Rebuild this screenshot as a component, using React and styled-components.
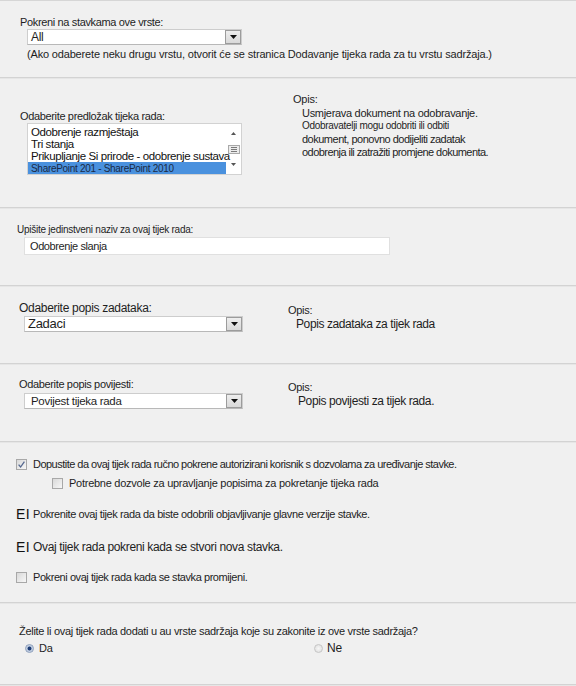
import React from "react";
import styled, { createGlobalStyle } from "styled-components";

const Global = createGlobalStyle`
  html, body { margin: 0; padding: 0; background: #f0f0f0; }
  body { font-family: "Liberation Sans", Arial, sans-serif; color: #1e1e1e; }
  #root { width: 576px; height: 686px; overflow: hidden; }
`;

const Page = styled.div`
  width: 576px;
  height: 686px;
  background: #f0f0f0;
  border-top: 1px solid #d6d6d6;
  box-sizing: border-box;
`;

const Section = styled.div`
  height: ${(p) => p.$h}px;
  box-sizing: border-box;
  border-bottom: 1px solid #d3d3d3;
  box-shadow: 0 1px 0 #e6e6e6;
  padding: ${(p) => p.$pad || "0"};
  display: ${(p) => (p.$cols ? "grid" : "block")};
  grid-template-columns: ${(p) => p.$cols || "none"};
`;

const Col = styled.div`
  padding-top: ${(p) => p.$top || 0}px;
  padding-left: ${(p) => p.$left || 0}px;
`;

const Label = styled.div`
  font-size: ${(p) => p.$size || 11}px;
  line-height: ${(p) => p.$lh || 13}px;
  letter-spacing: ${(p) => p.$ls ?? -0.35}px;
  white-space: nowrap;
  margin-left: ${(p) => p.$ml || 0}px;
`;

const Note = styled.div`
  font-size: 11px;
  line-height: 13px;
  letter-spacing: -0.17px;
  white-space: nowrap;
  margin: 3px 0 0 7px;
`;

const SelectBox = styled.div`
  width: ${(p) => p.$w}px;
  height: 16px;
  margin: ${(p) => p.$mt || 0}px 0 0 ${(p) => p.$ml}px;
  background: #fff;
  border: 1px solid #cdcdcd;
  border-bottom-color: #b8b8b8;
  box-sizing: border-box;
  display: flex;
  align-items: center;
  justify-content: space-between;
  padding-left: ${(p) => p.$pl || 3}px;
`;

const SelectText = styled.span`
  font-size: ${(p) => p.$size || 12}px;
  letter-spacing: -0.3px;
  line-height: 14px;
  white-space: nowrap;
`;

const ArrowBtn = styled.div`
  width: 16px;
  height: 14px;
  border: 1px solid #9c9c9c;
  background: linear-gradient(#eeeeee, #d9d9d9);
  box-sizing: border-box;
  display: flex;
  align-items: center;
  justify-content: center;
  svg { display: block; }
`;

const Arrow = () => (
  <svg width="7" height="4" viewBox="0 0 7 4">
    <path d="M0 0h7L3.5 4z" fill="#111" />
  </svg>
);

const Select = ({ w, ml, mt, text, size, pl }) => (
  <SelectBox $w={w} $ml={ml} $mt={mt} $pl={pl}>
    <SelectText $size={size}>{text}</SelectText>
    <ArrowBtn>
      <Arrow />
    </ArrowBtn>
  </SelectBox>
);

const ListBox = styled.div`
  width: 215px;
  height: 52px;
  margin: 0 0 0 7px;
  background: #fff;
  border: 1px solid #d2d2d2;
  box-sizing: border-box;
  display: flex;
  overflow: hidden;
`;

const ListItems = styled.div`
  flex: 1;
  min-width: 0;
  padding-top: 2px;
  white-space: nowrap;
`;

const ListItem = styled.div`
  padding-left: 3px;
  white-space: nowrap;
  background: ${(p) => (p.$sel ? "#4a91de" : "transparent")};
  font-size: ${(p) => (p.$sel ? 10 : 11.5)}px;
  letter-spacing: ${(p) => (p.$sel ? -0.3 : -0.4)}px;
  line-height: ${(p) => (p.$sel ? 13 : 12)}px;
  height: ${(p) => (p.$sel ? 13 : 12)}px;
  color: ${(p) => (p.$sel ? "#1b2a44" : "#111")};
  position: relative;
  z-index: 1;
  width: max-content;
  min-width: calc(100% - 3px);
`;

const ScrollBar = styled.div`
  width: 15px;
  flex: none;
  display: flex;
  flex-direction: column;
  align-items: center;
  justify-content: space-between;
  padding: 8px 0 8px;
  box-sizing: border-box;
`;

const Thumb = styled.div`
  width: 12px;
  height: 9px;
  border: 1px solid #a9a9a9;
  background: #ececec;
  box-sizing: border-box;
  display: flex;
  flex-direction: column;
  justify-content: center;
  align-items: center;
  gap: 1px;
  span { display: block; width: 6px; height: 1px; background: #7a7a7a; }
`;

const ScrollArrow = ({ up }) => (
  <svg width="5" height="3" viewBox="0 0 5 3">
    <path d={up ? "M0 3h5L2.5 0z" : "M0 0h5L2.5 3z"} fill="#555" />
  </svg>
);

const Desc = styled.div`
  font-size: ${(p) => p.$size || 11}px;
  line-height: ${(p) => p.$lh || 13}px;
  letter-spacing: ${(p) => p.$ls ?? -0.2}px;
  margin-left: ${(p) => p.$ml ?? 9}px;
  white-space: nowrap;
`;

const TextInput = styled.div`
  width: 366px;
  height: 18px;
  margin: 1px 0 0 7px;
  background: #fff;
  border: 1px solid #e0e0e0;
  box-sizing: border-box;
  font-size: 11px;
  line-height: 16px;
  padding-left: 5px;
  letter-spacing: -0.4px;
`;

const OptionRow = styled.div`
  display: flex;
  align-items: center;
  gap: ${(p) => p.$gap || 6}px;
  margin-left: ${(p) => p.$ml ?? 16}px;
  margin-top: ${(p) => p.$mt || 0}px;
  height: 13px;
`;

const Box = styled.div`
  width: 11px;
  height: 11px;
  box-sizing: border-box;
  border: 1px solid #a8a8a8;
  background: linear-gradient(135deg, #d9d9d9, #f7f7f7);
  display: flex;
  align-items: center;
  justify-content: center;
  flex: none;
`;

const Check = () => (
  <svg width="9" height="9" viewBox="0 0 9 9">
    <path d="M1.6 4.6l2 2.4 3.8-5.4" fill="none" stroke="#55688f" strokeWidth="1.3" />
  </svg>
);

const Glyph = styled.span`
  font-size: 14px;
  line-height: 13px;
  width: 11px;
  flex: none;
  letter-spacing: 0.5px;
  color: #111;
`;

const OptText = styled.span`
  font-size: ${(p) => p.$size || 11}px;
  letter-spacing: ${(p) => p.$ls ?? -0.4}px;
  white-space: nowrap;
  line-height: 13px;
`;

const RadioRow = styled.div`
  display: grid;
  grid-template-columns: 289px 1fr;
  margin-top: 4px;
  padding-left: 6px;
`;

const Radio = styled.div`
  display: flex;
  align-items: center;
  gap: ${(p) => p.$gap || 5}px;
  height: 13px;
`;

const Dot = styled.div`
  width: 9px;
  height: 9px;
  border-radius: 50%;
  box-sizing: border-box;
  border: 1px solid ${(p) => (p.$on ? "#8d9fbb" : "#c6c6c6")};
  background: ${(p) =>
    p.$on
      ? "radial-gradient(circle, #1e3d75 0 1.6px, #b5c4dc 2.3px, #e9edf3 100%)"
      : "radial-gradient(circle, #f6f6f6, #dcdcdc)"};
  flex: none;
`;

export default function App() {
  return (
    <>
      <Global />
      <Page>
        <Section $h={77} $pad="15px 0 0 20px">
          <Label>Pokreni na stavkama ove vrste:</Label>
          <Select w={215} ml={7} text="All" />
          <Note>
            (Ako odaberete neku drugu vrstu, otvorit će se stranica Dodavanje tijeka rada za tu vrstu sadržaja.)
          </Note>
        </Section>

        <Section $h={130} $cols="293px 1fr">
          <Col $top={32} $left={20}>
            <Label>Odaberite predložak tijeka rada:</Label>
            <ListBox>
              <ListItems>
                <ListItem>Odobrenje razmještaja</ListItem>
                <ListItem>Tri stanja</ListItem>
                <ListItem>Prikupljanje Si prirode - odobrenje sustava</ListItem>
                <ListItem $sel>SharePoint 201 - SharePoint 2010</ListItem>
              </ListItems>
              <ScrollBar>
                <ScrollArrow up />
                <Thumb>
                  <span />
                  <span />
                  <span />
                </Thumb>
                <ScrollArrow />
              </ScrollBar>
            </ListBox>
          </Col>
          <Col $top={15}>
            <Label $ls={-0.2}>Opis:</Label>
            <Desc $size={11} $lh={14} $ls={-0.3}>Usmjerava dokument na odobravanje.</Desc>
            <Desc $size={10} $lh={12} $ls={-0.3}>Odobravatelji mogu odobriti ili odbiti</Desc>
            <Desc $size={11} $lh={14} $ls={-0.5}>dokument, ponovno dodijeliti zadatak</Desc>
            <Desc $size={11} $lh={12} $ls={-0.55}>odobrenja ili zatražiti promjene dokumenta.</Desc>
          </Col>
        </Section>

        <Section $h={78} $pad="15px 0 0 17px">
          <Label $size={10} $ls={-0.25}>Upišite jedinstveni naziv za ovaj tijek rada:</Label>
          <TextInput>Odobrenje slanja</TextInput>
        </Section>

        <Section $h={78} $cols="288px 1fr">
          <Col $top={15} $left={19}>
            <Label $size={12} $lh={14} $ls={-0.3}>Odaberite popis zadataka:</Label>
            <Select w={219} ml={5} mt={1} text="Zadaci" size={13} />
          </Col>
          <Col $top={18}>
            <Label $ls={-0.3}>Opis:</Label>
            <Desc $size={12} $lh={14} $ls={-0.4} $ml={8}>Popis zadataka za tijek rada</Desc>
          </Col>
        </Section>

        <Section $h={78} $cols="288px 1fr">
          <Col $top={14} $left={19}>
            <Label $ls={-0.35}>Odaberite popis povijesti:</Label>
            <Select w={219} ml={5} mt={2} text="Povijest tijeka rada" size={11.5} pl={6} />
          </Col>
          <Col $top={17}>
            <Label $ls={-0.3}>Opis:</Label>
            <Desc $size={12} $lh={14} $ls={-0.4} $ml={10}>Popis povijesti za tijek rada.</Desc>
          </Col>
        </Section>

        <Section $h={161} $pad="16px 0 0 0">
          <OptionRow>
            <Box>
              <Check />
            </Box>
            <OptText $ls={-0.52}>
              Dopustite da ovaj tijek rada ručno pokrene autorizirani korisnik s dozvolama za uređivanje stavke.
            </OptText>
          </OptionRow>
          <OptionRow $ml={52} $mt={6}>
            <Box />
            <OptText $ls={-0.26}>Potrebne dozvole za upravljanje popisima za pokretanje tijeka rada</OptText>
          </OptionRow>
          <OptionRow $mt={18}>
            <Glyph>EI</Glyph>
            <OptText $ls={-0.4}>Pokrenite ovaj tijek rada da biste odobrili objavljivanje glavne verzije stavke.</OptText>
          </OptionRow>
          <OptionRow $mt={20}>
            <Glyph>EI</Glyph>
            <OptText $size={12} $ls={-0.35}>Ovaj tijek rada pokreni kada se stvori nova stavka.</OptText>
          </OptionRow>
          <OptionRow $mt={17}>
            <Box />
            <OptText $ls={-0.43}>Pokreni ovaj tijek rada kada se stavka promijeni.</OptText>
          </OptionRow>
        </Section>

        <Section $h={82} $pad="22px 0 0 19px">
          <Label $ls={-0.3}>Želite li ovaj tijek rada dodati u au vrste sadržaja koje su zakonite iz ove vrste sadržaja?</Label>
          <RadioRow>
            <Radio>
              <Dot $on />
              <OptText $ls={-0.3}>Da</OptText>
            </Radio>
            <Radio $gap={4}>
              <Dot />
              <OptText $size={12} $ls={-0.2}>Ne</OptText>
            </Radio>
          </RadioRow>
        </Section>
      </Page>
    </>
  );
}
